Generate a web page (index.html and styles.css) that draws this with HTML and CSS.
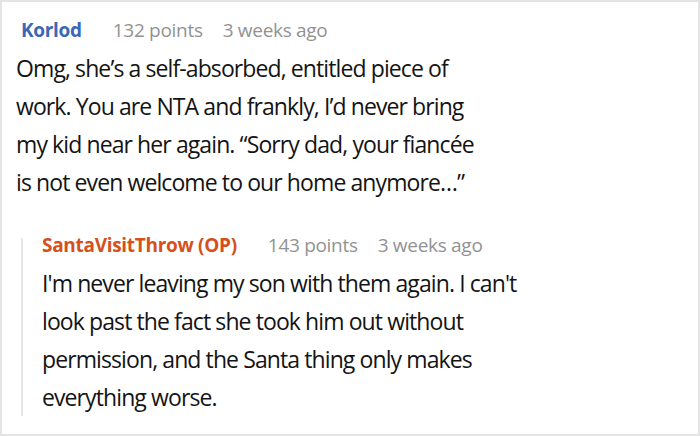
FILE: index.html
```html
<!DOCTYPE html>
<html>
<head>
<meta charset="utf-8">
<link rel="stylesheet" href="styles.css">
</head>
<body>
<div class="card">
  <div class="comment">
    <div class="meta">
      <span class="author">Korlod</span>
      <span class="info">132 points</span>
      <span class="info">3 weeks ago</span>
    </div>
    <p class="text">Omg, she’s a self-absorbed, entitled piece of work. You are NTA and frankly, I’d never bring my kid near her again. “Sorry dad, your fiancée is not even welcome to our home anymore…”</p>
  </div>
  <div class="reply">
    <div class="meta">
      <span class="author op">SantaVisitThrow (OP)</span>
      <span class="info">143 points</span>
      <span class="info">3 weeks ago</span>
    </div>
    <p class="text">I'm never leaving my son with them again. I can't look past the fact she took him out without permission, and the Santa thing only makes everything worse.</p>
  </div>
</div>
</body>
</html>
```
FILE: styles.css
```css
html, body {
  margin: 0;
  padding: 0;
  background: #fff;
}
.card {
  width: 700px;
  height: 436px;
  box-sizing: border-box;
  border: 2px solid #e4e4e4;
  padding-top: 21px;
  font-family: "Open Sans", "Noto Sans", sans-serif;
  color: #141414;
}
.meta {
  display: flex;
  gap: 20px;
  align-items: baseline;
  font-size: 19px;
  line-height: 14px;
  letter-spacing: -0.3px;
}
.author {
  font-weight: 700;
  color: #3b68b4;
  margin-right: 11px;
}
.author.op {
  color: #d6501c;
}
.info {
  color: #929292;
}
.comment .meta {
  padding-left: 19px;
}
.text {
  margin: 12px 0 0 0;
  font-size: 23px;
  line-height: 38px;
  letter-spacing: -0.9px;
}
.comment .text {
  padding-left: 14px;
  width: 470px;
}
.reply {
  margin: 37px 0 0 19px;
  border-left: 2px solid #e6e6e6;
  padding-left: 19px;
}
.reply .text {
  width: 490px;
}
```
